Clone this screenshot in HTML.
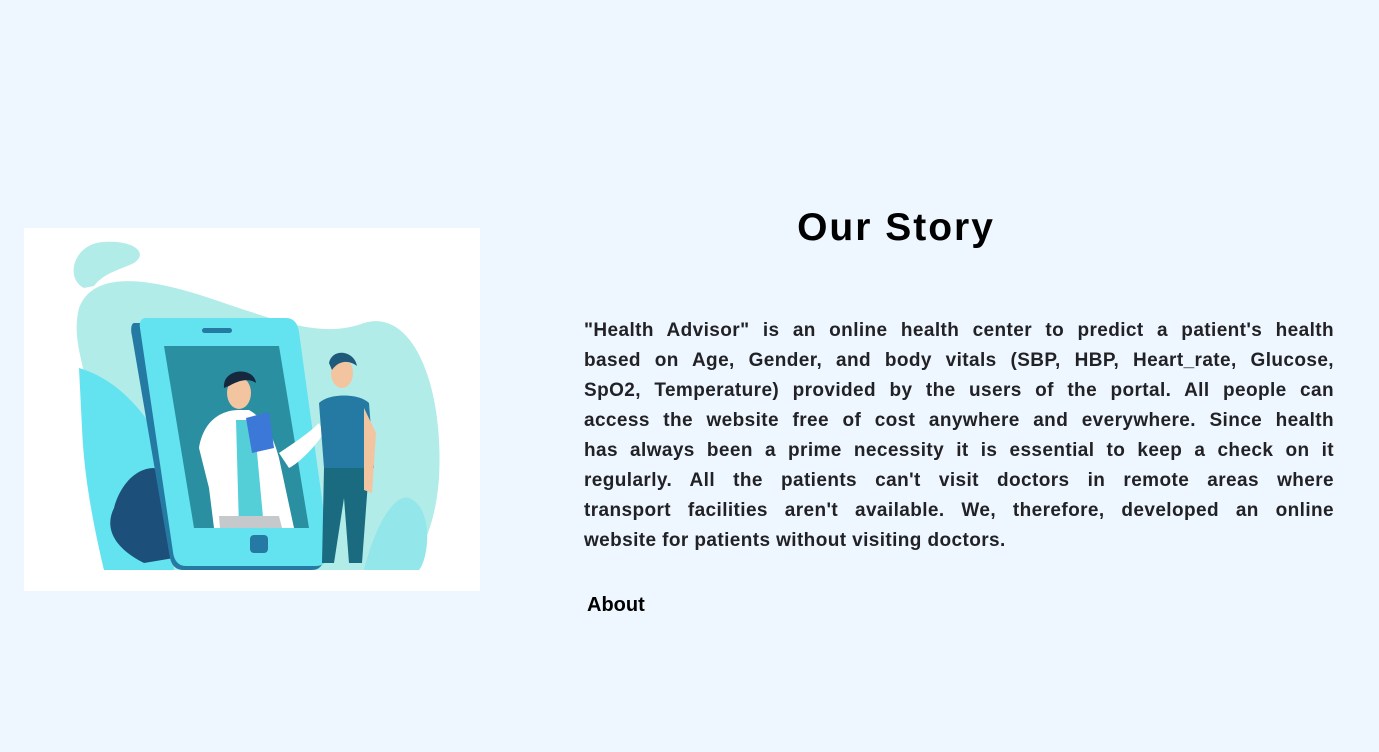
<!DOCTYPE html>
<html><head><style>
body{margin:0;width:1379px;height:752px;background:#eef7ff;font-family:"Liberation Sans",sans-serif;position:relative;overflow:hidden}
.img{position:absolute;left:24px;top:228px;width:456px;height:363px;background:#fff}
h1{position:absolute;left:700px;width:392px;top:206px;margin:0;text-align:center;font-size:39px;letter-spacing:2px;color:#000;font-weight:bold}
.p{position:absolute;left:584px;top:316px;width:750px;color:#222226;font-weight:bold;font-size:19px;line-height:30px;letter-spacing:0.4px}
.p div{text-align:justify;text-align-last:justify;white-space:nowrap;overflow:visible}
.p div.l{text-align-last:left}
.ab{position:absolute;left:587px;top:594px;font-weight:bold;font-size:20px;color:#000}
</style></head><body>
<div class="img"><svg width="456" height="363" viewBox="0 0 456 363">
<path d="M60 60 C40 50 50 15 80 14 C110 12 125 25 110 35 C95 42 80 45 70 58 Z" fill="#b2ece8"/>
<path d="M55 80 C70 40 130 50 200 75 C260 95 300 110 340 95 C390 80 420 160 415 250 C410 320 380 345 380 342 L80 342 C70 300 60 240 65 200 C70 150 45 120 55 80Z" fill="#b2ece8"/>
<path d="M55 140 C90 150 120 180 140 220 L150 342 L80 342 C70 300 60 250 58 200Z" fill="#63e3ef"/>
<path d="M385 270 C410 280 405 330 395 342 L340 342 C350 300 370 265 385 270Z" fill="#93e6ea"/>
<path d="M130 240 C150 255 160 290 150 330 L120 335 C90 320 80 300 90 280 C95 260 110 240 130 240Z" fill="#1c4f7a"/>
<path d="M110 95 L258 95 C266 95 270 100 270 108 L300 328 C300 336 296 342 288 342 L160 342 C152 342 148 338 146 330 L108 108 C106 100 108 95 110 95Z" fill="#257aa3"/>
<path d="M122 90 L262 90 C270 90 274 96 275 104 L305 322 C306 332 300 338 292 338 L162 338 C154 338 150 332 149 324 L116 100 C115 94 117 90 122 90Z" fill="#63e3ef"/>
<rect x="178" y="100" width="30" height="5" rx="2.5" fill="#257aa3"/>
<path d="M140 118 L255 118 L285 300 L170 300 Z" fill="#2a8fa0"/>
<rect x="226" y="307" width="18" height="18" rx="4" fill="#257aa3"/>
<path d="M175 220 C180 190 200 182 215 182 L225 182 C240 190 250 210 255 230 L270 300 L190 300 L185 260 Z" fill="#fff"/>
<path d="M212 192 L230 192 L240 300 L215 300Z" fill="#54cfd8"/>
<path d="M195 288 L255 288 L258 300 L196 300Z" fill="#c6c9cc"/>
<ellipse cx="215" cy="165" rx="12" ry="16" fill="#f2c4a0"/>
<path d="M200 160 C198 140 230 138 232 155 C225 150 215 152 205 158Z" fill="#16283d"/>
<path d="M222 190 L245 184 L250 220 L228 225Z" fill="#3c78d8"/>
<path d="M255 225 C270 215 285 205 295 195 L300 205 C290 220 275 235 265 240Z" fill="#fff"/>
<ellipse cx="318" cy="145" rx="11" ry="15" fill="#f2c4a0"/>
<path d="M305 135 C308 120 330 122 333 138 C325 132 315 132 308 142Z" fill="#205a7a"/>
<path d="M295 175 C305 165 335 165 345 175 L350 240 L300 240 Z" fill="#257aa3"/>
<path d="M300 240 L345 240 L338 335 L325 335 L320 270 L310 335 L298 335Z" fill="#1a6a80"/>
<path d="M340 180 L352 205 L348 265 L340 262Z" fill="#f2c4a0"/>
</svg></div>
<h1>Our Story</h1>
<div class="p">
<div>"Health Advisor" is an online health center to predict a patient's health</div>
<div>based on Age, Gender, and body vitals (SBP, HBP, Heart_rate, Glucose,</div>
<div>SpO2, Temperature) provided by the users of the portal. All people can</div>
<div>access the website free of cost anywhere and everywhere. Since health</div>
<div>has always been a prime necessity it is essential to keep a check on it</div>
<div>regularly. All the patients can't visit doctors in remote areas where</div>
<div>transport facilities aren't available. We, therefore, developed an online</div>
<div class="l">website for patients without visiting doctors.</div>
</div>
<div class="ab">About</div>
</body></html>
